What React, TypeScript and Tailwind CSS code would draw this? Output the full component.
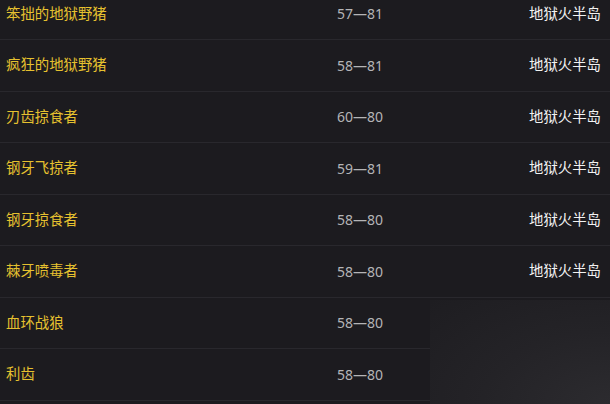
import React from 'react';

type Row = {
  name: string;
  level: string;
  zone?: string;
};

const ROWS: Row[] = [
  { name: '笨拙的地狱野猪', level: '57—81', zone: '地狱火半岛' },
  { name: '疯狂的地狱野猪', level: '58—81', zone: '地狱火半岛' },
  { name: '刃齿掠食者', level: '60—80', zone: '地狱火半岛' },
  { name: '钢牙飞掠者', level: '59—81', zone: '地狱火半岛' },
  { name: '钢牙掠食者', level: '58—80', zone: '地狱火半岛' },
  { name: '棘牙喷毒者', level: '58—80', zone: '地狱火半岛' },
  { name: '血环战狼', level: '58—80' },
  { name: '利齿', level: '58—80' },
];

export default function App() {
  return (
    <div
      className="relative h-[404px] w-[610px] overflow-hidden bg-[#1c1b1f] text-[14.4px]"
      style={{ fontFamily: '"Noto Sans", "Noto Sans CJK SC", sans-serif' }}
    >
      <div className="-mt-[11.5px] flex flex-col">
        {ROWS.map(row => (
          <div
            key={row.name}
            className="flex h-[51.5px] items-center border-b border-[#29282d] pl-[6px] pr-[9px]"
          >
            <span className="w-[331px] text-[#e6c12f]">{row.name}</span>
            <span className="w-[120px] text-[14px] text-[#b4b4b6]">{row.level}</span>
            <span className="flex-1 text-right text-[#f2f2f2]">{row.zone}</span>
          </div>
        ))}
      </div>
      {/* faint lighter smudge over the lower right corner */}
      <div className="pointer-events-none absolute bottom-0 right-0 h-[104px] w-[180px] bg-[radial-gradient(ellipse_at_bottom_right,#2c2b2f_0%,#242327_50%,#1e1d21_100%)]" />
    </div>
  );
}
